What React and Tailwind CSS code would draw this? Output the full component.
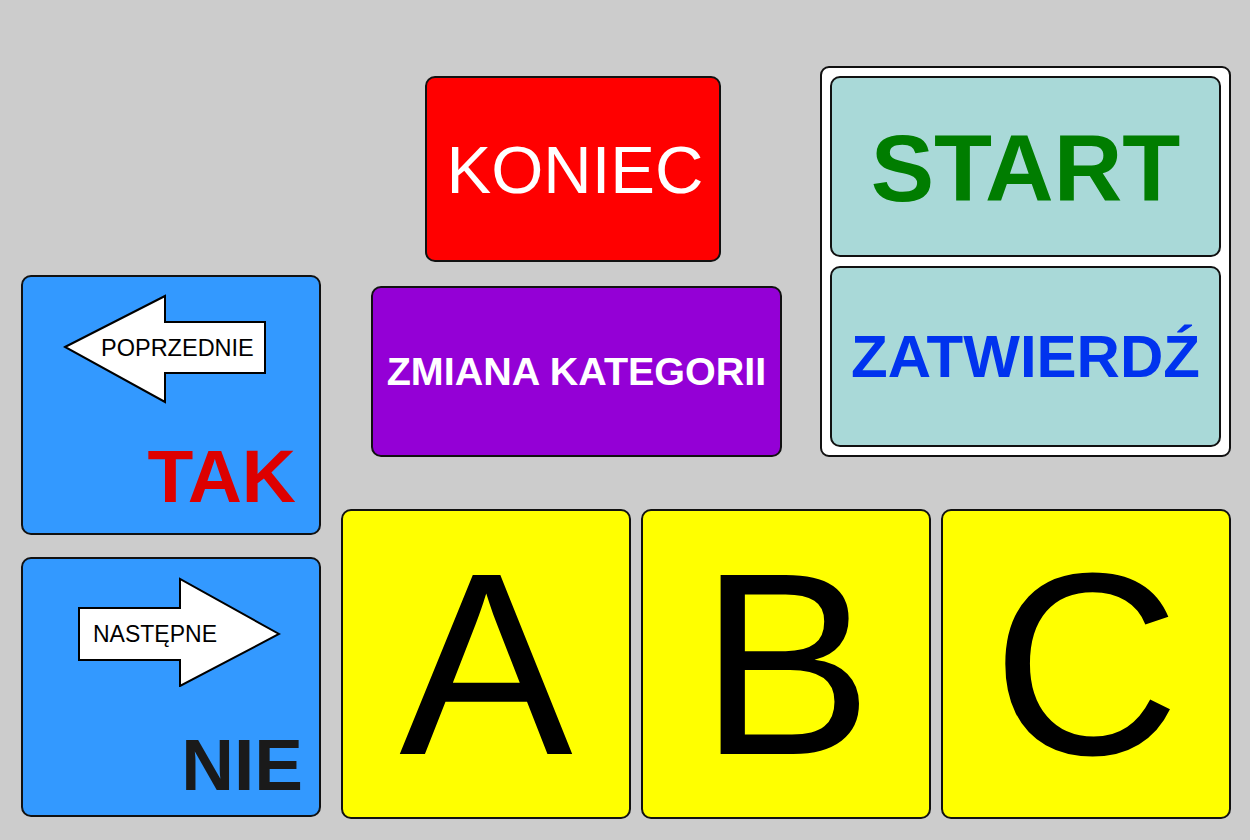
const font = { fontFamily: '"Liberation Sans", Arial, sans-serif' }

function ArrowLeft() {
    return (
        <svg width="204" height="110" viewBox="0 0 204 110" className="block">
            <polygon
                points="2,53 102,2 102,28 202,28 202,79 102,79 102,108"
                fill="#ffffff"
                stroke="#000000"
                strokeWidth="2"
                strokeLinejoin="miter"
            />
            <text x="38" y="62" fontSize="23.5" fill="#000000" style={font}>POPRZEDNIE</text>
        </svg>
    )
}

function ArrowRight() {
    return (
        <svg width="204" height="110" viewBox="0 0 204 110" className="block">
            <polygon
                points="2,31 103,31 103,2 202,57 103,109 103,83 2,83"
                fill="#ffffff"
                stroke="#000000"
                strokeWidth="2"
                strokeLinejoin="miter"
            />
            <text x="16" y="65" fontSize="23" fill="#000000" style={font}>NASTĘPNE</text>
        </svg>
    )
}

function Letter({ children }) {
    return (
        <div className="w-[290px] h-[310px] rounded-[10px] border-2 border-[#111] bg-[#ffff00] flex items-center justify-center">
            <span className="text-[260px] leading-none text-black">{children}</span>
        </div>
    )
}

export default function App() {
    return (
        <div className="min-h-screen w-full bg-[#cccccc] flex" style={font}>
            {/* left column: TAK / NIE */}
            <div className="flex flex-col pl-[21px] pt-[275px] gap-[22px]">
                <div className="w-[300px] h-[260px] rounded-[10px] border-2 border-[#111] bg-[#3399ff] flex flex-col justify-between">
                    <div className="pl-[40px] pt-[17px]">
                        <ArrowLeft />
                    </div>
                    <div className="text-right pr-[23px] pb-[19px] text-[75px] leading-none font-bold text-[#dd0000]">TAK</div>
                </div>
                <div className="w-[300px] h-[260px] rounded-[10px] border-2 border-[#111] bg-[#3399ff] flex flex-col justify-between">
                    <div className="pl-[54px] pt-[18px]">
                        <ArrowRight />
                    </div>
                    <div className="text-right pr-[16px] pb-[14px] text-[73px] leading-none font-bold text-[#1a1a1a]">NIE</div>
                </div>
            </div>

            <div className="ml-[20px] flex flex-col">
                <div className="flex h-[509px]">
                    <div className="ml-[30px] pt-[76px] flex flex-col gap-[24px]">
                        <div className="ml-[54px] w-[296px] h-[186px] rounded-[10px] border-2 border-[#111] bg-[#ff0000] flex items-center justify-center">
                            <span className="text-[67px] leading-none text-white pl-[4px]">KONIEC</span>
                        </div>
                        <div className="w-[411px] h-[171px] rounded-[10px] border-2 border-[#111] bg-[#9400d6] flex items-center justify-center">
                            <span className="text-[39.5px] leading-none font-bold text-white">ZMIANA KATEGORII</span>
                        </div>
                    </div>

                    <div className="ml-[38px] mt-[66px] w-[411px] h-[391px] rounded-[9px] border-2 border-[#111] bg-white px-[8px] pt-[8px] flex flex-col gap-[9px]">
                        <div className="h-[181px] rounded-[10px] border-2 border-[#111] bg-[#a9d9d8] flex items-center justify-center">
                            <span className="text-[95px] leading-none font-bold text-[#007d00] pt-[4px]">START</span>
                        </div>
                        <div className="h-[181px] rounded-[10px] border-2 border-[#111] bg-[#a9d9d8] flex items-center justify-center">
                            <span className="text-[60px] leading-none font-bold text-[#0033ee]">ZATWIERDŹ</span>
                        </div>
                    </div>
                </div>

                <div className="flex gap-[10px]">
                    <Letter>A</Letter>
                    <Letter>B</Letter>
                    <Letter>C</Letter>
                </div>
            </div>
        </div>
    )
}
